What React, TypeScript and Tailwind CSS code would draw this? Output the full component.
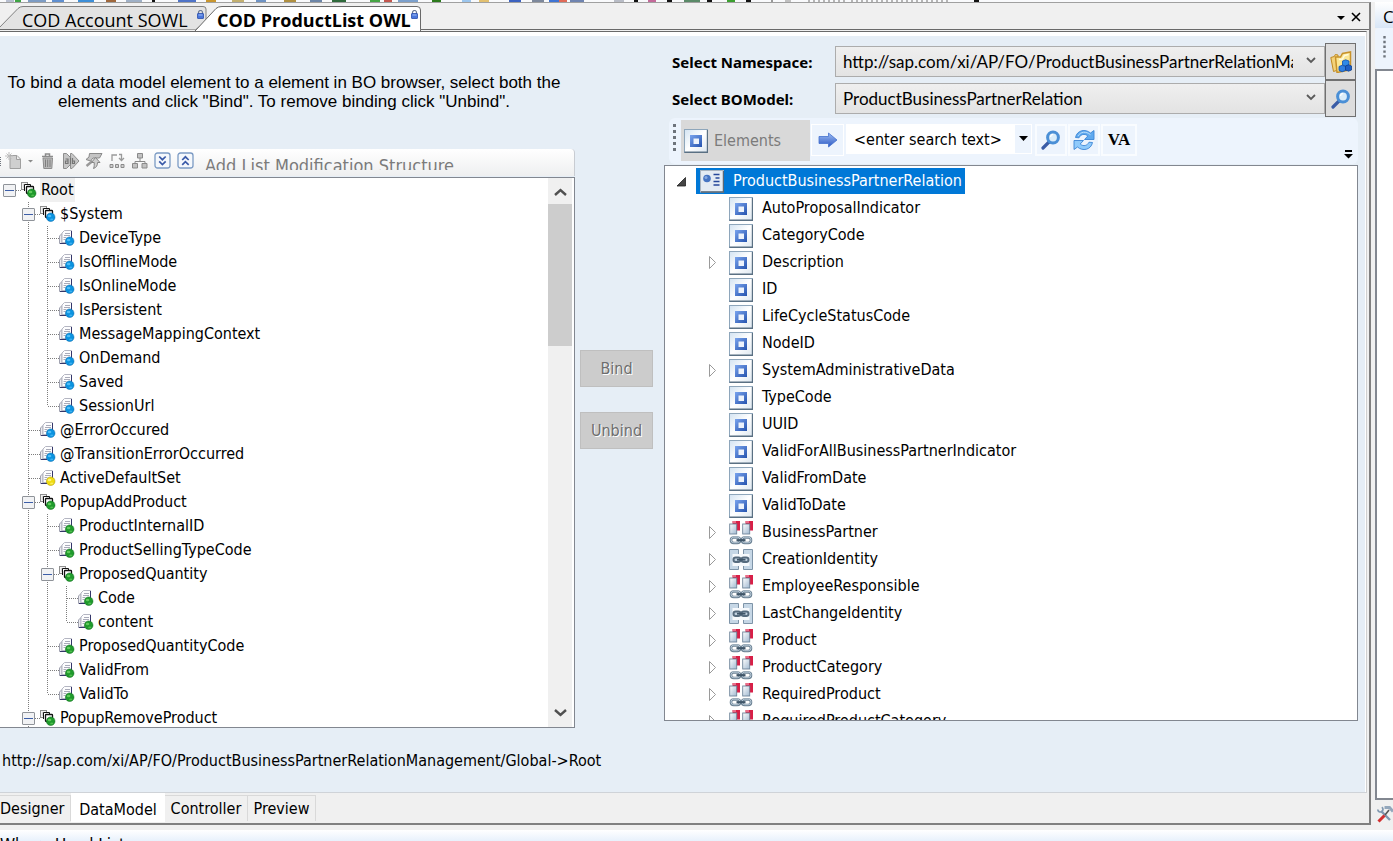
import React from "react";

const tahoma = "font-['DejaVu_Sans_Condensed','Noto_Sans',sans-serif]";

type Cell = "blank" | "pass" | "tee" | "ell" | "box" | "boxTop";
type Tone = "green" | "blue" | "yellow";
interface Node {
  label: string;
  cells: Cell[];
  group?: boolean;
  tone: Tone;
  selected?: boolean;
}

const leaf2 = (label: string, tone: Tone, last = false): Node => ({
  label,
  cells: ["blank", "pass", last ? "ell" : "tee"],
  tone,
});

const dataModel: Node[] = [
  { label: "Root", cells: ["boxTop"], group: true, tone: "green", selected: true },
  { label: "$System", cells: ["blank", "box"], group: true, tone: "blue" },
  leaf2("DeviceType", "blue"),
  leaf2("IsOfflineMode", "blue"),
  leaf2("IsOnlineMode", "blue"),
  leaf2("IsPersistent", "blue"),
  leaf2("MessageMappingContext", "blue"),
  leaf2("OnDemand", "blue"),
  leaf2("Saved", "blue"),
  leaf2("SessionUrl", "blue", true),
  { label: "@ErrorOccured", cells: ["blank", "tee"], tone: "blue" },
  { label: "@TransitionErrorOccurred", cells: ["blank", "tee"], tone: "blue" },
  { label: "ActiveDefaultSet", cells: ["blank", "tee"], tone: "yellow" },
  { label: "PopupAddProduct", cells: ["blank", "box"], group: true, tone: "green" },
  leaf2("ProductInternalID", "green"),
  leaf2("ProductSellingTypeCode", "green"),
  { label: "ProposedQuantity", cells: ["blank", "pass", "box"], group: true, tone: "green" },
  { label: "Code", cells: ["blank", "pass", "pass", "tee"], tone: "green" },
  { label: "content", cells: ["blank", "pass", "pass", "ell"], tone: "green" },
  leaf2("ProposedQuantityCode", "green"),
  leaf2("ValidFrom", "green"),
  leaf2("ValidTo", "green", true),
  { label: "PopupRemoveProduct", cells: ["blank", "box"], group: true, tone: "green" },
];

type Kind = "element" | "assoc" | "link";
const boElements: { label: string; kind: Kind; open?: boolean }[] = [
  { label: "AutoProposalIndicator", kind: "element" },
  { label: "CategoryCode", kind: "element" },
  { label: "Description", kind: "element", open: true },
  { label: "ID", kind: "element" },
  { label: "LifeCycleStatusCode", kind: "element" },
  { label: "NodeID", kind: "element" },
  { label: "SystemAdministrativeData", kind: "element", open: true },
  { label: "TypeCode", kind: "element" },
  { label: "UUID", kind: "element" },
  { label: "ValidForAllBusinessPartnerIndicator", kind: "element" },
  { label: "ValidFromDate", kind: "element" },
  { label: "ValidToDate", kind: "element" },
  { label: "BusinessPartner", kind: "assoc", open: true },
  { label: "CreationIdentity", kind: "link", open: true },
  { label: "EmployeeResponsible", kind: "assoc", open: true },
  { label: "LastChangeIdentity", kind: "link", open: true },
  { label: "Product", kind: "assoc", open: true },
  { label: "ProductCategory", kind: "assoc", open: true },
  { label: "RequiredProduct", kind: "assoc", open: true },
  { label: "RequiredProductCategory", kind: "assoc", open: true },
];

const ballFill: Record<Tone, [string, string, string]> = {
  green: ["#1f9a2c", "#7fe070", "#0f6a1c"],
  blue: ["#0b93e0", "#6fd0ff", "#0a66a8"],
  yellow: ["#f0dc10", "#fffbb0", "#a89200"],
};

function Ball({ tone }: { tone: Tone }) {
  const [base, light, dark] = ballFill[tone];
  return (
    <g>
      <circle cx="10.7" cy="11.2" r="4.300" fill={base} stroke={dark} strokeWidth="0.500" />
      <ellipse cx="9.600" cy="10" rx="1.800" ry="1.200" fill={light} opacity="0.700" />
      <ellipse cx="11.800" cy="13.400" rx="1.600" ry="0.900" fill={light} opacity="0.500" />
    </g>
  );
}

function NodeIcon({ group, tone }: { group?: boolean; tone: Tone }) {
  return (
    <svg width="16" height="16" viewBox="0 0 16 16" className="shrink-0" aria-hidden="true">
      {group ? (
        <g>
          <rect x="0.500" y="0.500" width="6" height="7" fill="#f2f2f2" stroke="#8f8f8f" />
          <path d="M2 3h3M2 5h2" stroke="#b5b5b5" />
          <path d="M3.500 9V2.500H9.500V4" fill="none" stroke="#111" />
          <path d="M4 3h5v2H6v4H4z" fill="#fff" />
          <rect x="5.500" y="4.500" width="7" height="7" rx="0.800" fill="#fff" stroke="#111" strokeWidth="1.300" />
        </g>
      ) : (
        <g>
          <path d="M0.500 6L3 3.500V13.500H0.500z" fill="#ececf0" stroke="#a0a2b0" />
          <path d="M3 3L5.500 0.500H12.500V12.500H3z" fill="#fdfdfe" stroke="#b4b6c2" />
          <path d="M12.500 1v7M1 13.500h6" stroke="#34366a" />
          <path d="M6 3.500h5M5 5.500h6M4.500 7.500h3M4.500 9.500h2" stroke="#a9abb9" />
        </g>
      )}
      <Ball tone={tone} />
    </svg>
  );
}

function TreeCell({ kind }: { kind: Cell }) {
  const dot = { stroke: "#7d7d7d", strokeDasharray: "1 1", fill: "none" };
  const boxed = kind === "box" || kind === "boxTop";
  return (
    <svg width="19" height="24" viewBox="0 0 19 24" className="shrink-0 overflow-visible" aria-hidden="true">
      {(kind === "pass" || kind === "tee" || kind === "box") && <path d="M9.500 0v24" {...dot} />}
      {kind === "ell" && <path d="M9.500 0v12" {...dot} />}
      {(kind === "tee" || kind === "ell" || boxed) && <path d="M10 12.500h11" {...dot} />}
      {boxed && (
        <g>
          <rect x="3.5" y="6.500" width="12" height="12" rx="0.5" fill="#f1f2f4" stroke="#8f9399" />
          <path d="M5 12.500h9" stroke="#3c5ea8" />
        </g>
      )}
    </svg>
  );
}

function ElementIcon() {
  return (
    <svg width="24" height="24" viewBox="0 0 24 24" className="shrink-0" aria-hidden="true">
      <defs>
        <linearGradient id="elFace" x1="0" y1="0" x2="1" y2="1">
          <stop offset="0" stopColor="#d3e3f2" />
          <stop offset="0.5" stopColor="#ffffff" />
          <stop offset="1" stopColor="#dde7f0" />
        </linearGradient>
        <linearGradient id="elBlue" x1="0" y1="0" x2="1" y2="1">
          <stop offset="0" stopColor="#7aa4ee" />
          <stop offset="1" stopColor="#2553ae" />
        </linearGradient>
      </defs>
      <rect x="0.5" y="0.5" width="23" height="23" fill="url(#elFace)" stroke="#8ea6bb" />
      <path d="M0.500 23.300h23V1" fill="none" stroke="#5a7083" strokeWidth="1.400" />
      <rect x="6" y="6" width="12" height="12" fill="url(#elBlue)" />
      <rect x="9.500" y="9.500" width="5.500" height="5.500" fill="#edf3fc" />
    </svg>
  );
}

function ChainLinks({ y }: { y: number }) {
  return (
    <g fill="none">
      <rect x="2" y={y} width="9" height="5.500" rx="2.700" stroke="#6b8193" strokeWidth="2.600" />
      <rect x="13" y={y} width="9" height="5.500" rx="2.700" stroke="#6b8193" strokeWidth="2.600" />
      <rect x="2" y={y - 0.3} width="9" height="5.500" rx="2.700" stroke="#c2d2e0" strokeWidth="0.900" />
      <rect x="13" y={y - 0.3} width="9" height="5.500" rx="2.700" stroke="#c2d2e0" strokeWidth="0.900" />
      <path d={`M7.500 ${y + 2.7}h9`} stroke="#3f5568" strokeWidth="2.200" />
    </g>
  );
}

function AssocIcon() {
  return (
    <svg width="24" height="24" viewBox="0 0 24 24" className="shrink-0" aria-hidden="true">
      <defs>
        <linearGradient id="asFace" x1="0" y1="0" x2="1" y2="1">
          <stop offset="0" stopColor="#ffffff" />
          <stop offset="1" stopColor="#9fb8d0" />
        </linearGradient>
      </defs>
      {[0, 13].map((x) => (
        <g key={x}>
          <rect x={x + 3.5} y="0" width="7.500" height="9.500" fill="#d81f47" />
          <path d={`M${x + 4} 1h3`} stroke="#f2879c" strokeWidth="1.500" />
          <rect x={x + 0.7} y="3" width="7" height="10" fill="url(#asFace)" stroke="#6d8499" strokeWidth="0.900" />
        </g>
      ))}
      <ChainLinks y={16.5} />
    </svg>
  );
}

function LinkIcon() {
  return (
    <svg width="24" height="24" viewBox="0 0 24 24" className="shrink-0" aria-hidden="true">
      <path d="M0.500 1.500h9v20H0.500z" fill="#c6d7e6" stroke="#7e94a8" />
      <path d="M14.500 1.500h9v20H14.500z" fill="#c6d7e6" stroke="#7e94a8" />
      <path d="M3.500 6h17v12h-17z" fill="#f6f9fc" />
      <rect x="4.500" y="9.500" width="7" height="4.500" rx="2.200" fill="#c2d2e0" stroke="#566b7e" strokeWidth="2" />
      <rect x="12.500" y="9.500" width="7" height="4.500" rx="2.200" fill="#c2d2e0" stroke="#566b7e" strokeWidth="2" />
      <path d="M8 11.700h8.500" stroke="#3f5568" strokeWidth="1.800" />
    </svg>
  );
}

function BusinessObjectIcon() {
  return (
    <svg width="24" height="23" viewBox="0 0 24 23" className="shrink-0" aria-hidden="true">
      <rect x="0.5" y="0.5" width="23" height="21.500" fill="#e4ebf3" stroke="#a9b4c0" />
      <path d="M1 22h22.500V1" fill="none" stroke="#5c6773" strokeWidth="1.500" />
      <circle cx="7" cy="8.500" r="3.800" fill="#4674c2" />
      <circle cx="6" cy="7.500" r="1.500" fill="#86a9e2" />
      <path d="M13.500 4.500h6M13.500 11.500h6M13.500 15h6" stroke="#27489a" strokeWidth="1.500" />
      <path d="M15.500 8h4" stroke="#27489a" strokeWidth="1.500" />
    </svg>
  );
}

function Magnifier() {
  return (
    <svg width="20" height="20" viewBox="0 0 20 20" aria-hidden="true">
      <path d="M2 18l6-6" stroke="#3a5ca6" strokeWidth="3.200" strokeLinecap="round" />
      <circle cx="12" cy="7.500" r="5.400" fill="#d9ecfa" stroke="#4a8fd6" strokeWidth="3" />
      <path d="M9.500 7a3 3 0 0 1 2.700-2.600" stroke="#fff" strokeWidth="1.300" fill="none" />
    </svg>
  );
}

function FolderIcon() {
  return (
    <svg width="22" height="22" viewBox="0 0 22 22" aria-hidden="true">
      <path d="M0.800 6.500l3.500-1 1-2L8 4v15l-4.500 1.500z" fill="#f3d27a" stroke="#c08a20" />
      <path d="M5.500 6h5l2-3.500L20.500 1v15l-4 3.500-9.500 2z" fill="#fbe795" stroke="#c8922a" strokeWidth="1.500" />
      <path d="M9 8.500l3.500-.5 2-3.500 4-1" stroke="#fffbe0" strokeWidth="1.500" fill="none" />
      <path d="M12.500 10l3.200-1.200L19 10v4l-3.300 1.200-3.200-1.200z" fill="#2f8ae6" stroke="#0e4fae" strokeWidth="0.800" />
      <path d="M9 15.500l3.200-1.200 3.300 1.200v4l-3.300 1.200L9 19.500z" fill="#2f7fe0" stroke="#0e4fae" strokeWidth="0.800" />
      <path d="M15.500 15l3-1.200 3 1.200v4l-3 1.200-3-1.200z" fill="#1d5fc4" stroke="#0b3f90" strokeWidth="0.800" />
    </svg>
  );
}

function RefreshIcon() {
  return (
    <svg width="22" height="22" viewBox="0 0 22 22" aria-hidden="true">
      <path d="M2.500 8.500C4 1 12.500-.5 17.500 4L21 1.500v9H11.500L14.800 7C11.500 4 7.500 5.500 6 8.800z" fill="#5fa9ee" stroke="#3c86d6" strokeWidth="0.900" />
      <path d="M5 7C7.500 2.500 13 2 17.500 5.700" fill="none" stroke="#b9dcfb" strokeWidth="1" />
      <path d="M19.500 13.500c-1.500 7.500-10 9-15 4.500L1 20.500v-9h9.500L7.200 15c3.300 3 7.300 1.500 8.800-1.800z" fill="#8fcafb" stroke="#3c86d6" strokeWidth="0.900" />
    </svg>
  );
}

function ArrowRight() {
  return (
    <svg width="20" height="16" viewBox="0 0 20 16" aria-hidden="true">
      <defs>
        <linearGradient id="arrowFill" x1="0" y1="0" x2="0" y2="1">
          <stop offset="0" stopColor="#9dbcf2" />
          <stop offset="1" stopColor="#2b58c4" />
        </linearGradient>
      </defs>
      <path d="M1 4.500h9.500V1L19 8l-8.500 7v-3.500H1z" fill="url(#arrowFill)" stroke="#4471cf" strokeWidth="0.800" />
    </svg>
  );
}

function Lock() {
  return (
    <svg width="7" height="9" viewBox="0 0 7 9" className="mt-[2px] shrink-0" aria-hidden="true">
      <path d="M1.500 4V2.500a2 2 0 0 1 4 0V4" fill="none" stroke="#6b7a96" strokeWidth="1.200" />
      <rect x="0.5" y="3.500" width="6" height="5" rx="0.500" fill="#4a77dc" stroke="#2a4fae" strokeWidth="0.800" />
      <path d="M1.500 5h4" stroke="#a9c2f6" strokeWidth="0.900" />
    </svg>
  );
}

function Grip({ className }: { className: string }) {
  return (
    <svg width="3" height="30" viewBox="0 0 3 30" className={className} aria-hidden="true">
      <path d="M1.500 0v30" stroke="#6e747c" strokeWidth="3" strokeDasharray="3 3" />
    </svg>
  );
}

function Chevron() {
  return (
    <svg width="10" height="7" viewBox="0 0 10 7" className="pointer-events-none absolute top-[11px] right-[9px]" aria-hidden="true">
      <path d="M1 1l4 4 4-4" fill="none" stroke="#5a5a5a" strokeWidth="1.800" />
    </svg>
  );
}

function ToolGlyph({ label, children }: { label: string; children: React.ReactNode }) {
  return (
    <button type="button" aria-label={label} className="shrink-0">
      <svg width="18" height="18" viewBox="0 0 18 18" aria-hidden="true">
        {children}
      </svg>
    </button>
  );
}

function DoubleChevronBox({ up }: { up?: boolean }) {
  return (
    <g fill="none">
      <rect x="1" y="1" width="15" height="15" rx="2.500" fill="#f5f8fc" stroke="#7c9bc4" strokeWidth="1.300" />
      {up ? (
        <path d="M5.200 8l3.200-3.200L11.700 8M5.200 12.800l3.200-3.200 3.300 3.200" stroke="#3a5aa8" strokeWidth="1.700" />
      ) : (
        <path d="M5.200 4.500l3.200 3.200 3.300-3.200M5.200 9.300l3.200 3.200 3.300-3.200" stroke="#3a5aa8" strokeWidth="1.700" />
      )}
    </g>
  );
}

const stripMarks: [number, number, string][] = [
  [6, 8, "#b8bfd0"], [15, 6, "#3fa545"], [28, 18, "#7d9cc4"], [52, 12, "#5f8fd0"], [78, 16, "#3d8fd8"],
  [106, 10, "#a0683c"], [126, 16, "#9fb0c6"], [152, 3, "#111"], [178, 18, "#4f74c8"], [206, 10, "#c9962e"],
  [232, 12, "#c3b070"], [256, 10, "#6f93c4"], [284, 12, "#b09040"], [310, 12, "#6d86a8"], [332, 14, "#2f6a3c"],
  [370, 10, "#46a545"], [384, 8, "#c4574f"], [398, 20, "#7ca0cc"], [432, 9, "#2c7a1c"], [462, 9, "#9cc6ee"],
  [479, 10, "#e2c070"], [509, 12, "#3c62c0"], [532, 12, "#7d889c"], [549, 10, "#3f74d4"], [559, 8, "#e06a58"],
  [570, 14, "#6f84b0"], [614, 10, "#b8bcc6"], [634, 4, "#111"], [648, 8, "#c46a9a"], [667, 5, "#111"],
  [684, 16, "#5a8a68"], [707, 5, "#111"], [727, 8, "#3ba02f"], [746, 5, "#111"], [771, 2, "#999"], [785, 6, "#c0c0c0"],
  [974, 5, "#111"],
];

export default function App() {
  return (
    <div className={`flex h-screen flex-col overflow-hidden bg-[#f0f0f0] text-base text-black ${tahoma}`}>
      <svg width="100%" height="2" className="block shrink-0 bg-[#f9fafc]" aria-hidden="true">
        {stripMarks.map(([x, w, c]) => (
          <rect key={x} x={x} y="0" width={w} height="2" fill={c} />
        ))}
        <path d="M808 1h38M851 1h100" stroke="#b5b5b5" strokeWidth="2" strokeDasharray="2 3" />
      </svg>

      <div className="flex min-h-0 flex-1">
        <section className="flex min-w-0 flex-1 flex-col border-t border-r-2 border-b-2 border-t-[#a0a0a0] border-r-[#808080] border-b-[#808080]">
          <div className="relative flex h-[27px] shrink-0 items-start border-b border-[#696969] font-['Open_Sans',sans-serif]">
            <svg width="424" height="28" viewBox="0 0 424 28" className="absolute top-0 left-0" aria-hidden="true">
              <path d="M-2 26L18 5.500Q20 3.500 23 3.500H203Q206 3.500 206 6V18L196 26.500" fill="#e3e3e3" stroke="#808080" />
              <path d="M195 28L216 5.500Q218 3.500 222 3.500H417Q420.500 3.500 420.500 7V26.500V28" fill="#fff" stroke="#696969" />
            </svg>
            <button type="button" className="relative flex w-52 shrink-0 items-start pt-[5px] pl-[22px] text-lg leading-6">
              <span className="w-[175px] text-left whitespace-nowrap">COD Account SOWL</span>
              <Lock />
            </button>
            <button type="button" className="relative flex items-start pt-[5px] pl-[9px] text-lg leading-6 font-bold">
              <span className="w-[194px] text-left whitespace-nowrap">COD ProductList OWL</span>
              <Lock />
            </button>
            <div className="relative ml-auto flex items-center gap-[6px] pt-[9px] pr-2">
              <button type="button" aria-label="Open documents">
                <svg width="8" height="10" viewBox="0 0 8 10" aria-hidden="true">
                  <path d="M0 4h8L4 8z" />
                </svg>
              </button>
              <button type="button" aria-label="Close">
                <svg width="10" height="10" viewBox="0 0 10 10" aria-hidden="true">
                  <path d="M1 1l8 8M9 1l-8 8" stroke="#000" strokeWidth="1.600" />
                </svg>
              </button>
            </div>
          </div>

          <main className="mt-px mr-[2px] flex min-h-0 flex-1 border-t border-r border-b border-t-[#696969] border-r-[#d0d0d0] border-b-[#cfd3d8] bg-white pt-1 pr-px">
            <div className="flex min-w-0 flex-1 bg-[#e6eef6] pr-[7px]">
              <div className="flex min-w-0 grow-[664] basis-0 flex-col">
                <div className="flex min-h-0 flex-1">
                  <div className="flex min-w-0 flex-1 flex-col">
                    <p className="mt-[37px] h-[76px] shrink-0 pr-[7px] text-center font-['Liberation_Sans',Arial,sans-serif] text-[17px] leading-[19px]">
                      To bind a data model element to a element in BO browser, select both the
                      <br />
                      elements and click "Bind". To remove binding click "Unbind".
                    </p>
                    <div className="flex h-[27px] shrink-0 items-start rounded-tr border-r border-[#c8ccd2] bg-linear-to-b from-white to-[#eeeff0] pt-[3px]">
                      <Grip className="h-5 w-px shrink-0" />
                      <div className="flex shrink-0 gap-[5px] pl-1">
                        <div className="flex items-center">
                          <ToolGlyph label="New">
                            <path d="M5 3.500h7l3.500 3.500v9.500H5z" fill="#cfcfcf" stroke="#9f9f9f" />
                            <path d="M11.500 3.500V7.500H15" fill="#eee" stroke="#9f9f9f" />
                            <path d="M4 0v8M0 4h8M1.500 1.500l5 5M6.500 1.500l-5 5" stroke="#bdbdbd" />
                          </ToolGlyph>
                          <svg width="11" height="18" viewBox="0 0 11 18" aria-hidden="true">
                            <path d="M5 8h5L7.500 10.500z" fill="#8a8a8a" />
                          </svg>
                        </div>
                        <ToolGlyph label="Delete">
                          <path d="M3 4.500h11M6.500 4V2h4v2" fill="none" stroke="#8c8c8c" strokeWidth="1.500" />
                          <path d="M4 6h9.500l-.7 10.500H4.800z" fill="#b8b8b8" stroke="#8c8c8c" />
                          <path d="M6.500 7.500v7.500M8.700 7.500v7.500M11 7.500v7.500" stroke="#7e7e7e" />
                        </ToolGlyph>
                        <ToolGlyph label="Rename">
                          <path d="M1.500 1.500h3l4 4v-4h1.500l7 7.500-7 7.500H8.500v-4l-4 4h-3z" fill="#c6c6c6" stroke="#8e8e8e" />
                          <path d="M8.500 5.500v7M3.500 7h2.500v4.500H3.500V9H6M10.500 6v5.500h2V9h-2" fill="none" stroke="#757575" strokeWidth="1.200" />
                        </ToolGlyph>
                        <ToolGlyph label="Bind to attribute">
                          <path d="M4.500 1.500h12.500l-2.500 4.500H8L5.500 9 1 7.500 4 5z" fill="#c4c4c4" stroke="#8a8a8a" />
                          <path d="M1.500 14l6-5" stroke="#999" strokeWidth="2.400" />
                          <path d="M10.500 5.500l4.500 5h-2.500c0 3-1 5-4 6 1-2 .7-4 .7-6H6.500z" fill="#cfcfcf" stroke="#858585" />
                        </ToolGlyph>
                        <ToolGlyph label="Move">
                          <path d="M4 9V3h5M11 2.500h2.500V8M11 6l2.500 2.500L16 6" fill="none" stroke="#9a9a9a" strokeWidth="1.300" />
                          <path d="M2 12.500h3v3H2zM7.500 12.500h3v3h-3zM13 12.500h3v3h-3z" fill="#d0d0d0" stroke="#8a8a8a" />
                        </ToolGlyph>
                        <ToolGlyph label="Structure">
                          <path d="M9 6v4M4 12V9.500h10V12" fill="none" stroke="#8a8a8a" />
                          <path d="M6.500 1.500h5v4.500h-5zM1.500 11.500h5V16h-5zM11 11.500h5V16h-5z" fill="#c2c2c2" stroke="#8a8a8a" />
                        </ToolGlyph>
                        <ToolGlyph label="Expand all">
                          <DoubleChevronBox />
                        </ToolGlyph>
                        <ToolGlyph label="Collapse all">
                          <DoubleChevronBox up />
                        </ToolGlyph>
                      </div>
                      <button type="button" className="ml-[10px] h-[18px] overflow-hidden pt-[2px] text-left text-lg leading-6 whitespace-nowrap text-[#7b7b7b]">
                        Add List Modification Structure
                      </button>
                    </div>
                    <div className="mt-px flex min-h-0 flex-1 border-t border-r border-b border-[#828790] bg-white pr-[2px]">
                      <ul role="tree" aria-label="Data model" className="min-w-0 flex-1 overflow-hidden">
                        {dataModel.map((n) => (
                          <li key={n.label} role="treeitem" className="flex h-6 items-center">
                            {n.cells.map((c, i) => (
                              <TreeCell key={i} kind={c} />
                            ))}
                            <span className="w-[2px] shrink-0" />
                            <NodeIcon group={n.group} tone={n.tone} />
                            <span className={n.selected ? "ml-[3px] bg-[#f0f0f0] px-px leading-6" : "ml-1 leading-6 whitespace-nowrap"}>
                              {n.label}
                            </span>
                          </li>
                        ))}
                      </ul>
                      <div className="flex w-6 shrink-0 flex-col bg-[#f0f0f0]">
                        <svg width="24" height="26" viewBox="0 0 24 26" className="shrink-0" aria-hidden="true">
                          <path d="M7 17l5.500-5 5.500 5" fill="none" stroke="#505050" strokeWidth="2.400" />
                        </svg>
                        <div className="h-[142px] bg-[#cdcdcd]" />
                        <svg width="24" height="26" viewBox="0 0 24 26" className="mt-auto shrink-0" aria-hidden="true">
                          <path d="M7 9l5.500 5 5.500-5" fill="none" stroke="#505050" strokeWidth="2.400" />
                        </svg>
                      </div>
                    </div>
                  </div>
                  <div className="flex w-[89px] shrink-0 flex-col gap-[25px] pt-[314px] pr-[11px] pl-[5px] text-[#6d6d6d]">
                    <button type="button" className="h-[37px] border border-[#bfbfbf] bg-[#cccccc] text-shadow-[1px_1px_0_#fff]">
                      Bind
                    </button>
                    <button type="button" className="h-[37px] border border-[#bfbfbf] bg-[#cccccc] text-shadow-[1px_1px_0_#fff]">
                      Unbind
                    </button>
                  </div>
                </div>
                <p className="flex h-16 shrink-0 items-center pt-px pl-[2px] whitespace-nowrap">
                  http://sap.com/xi/AP/FO/ProductBusinessPartnerRelationManagement/Global-&gt;Root
                </p>
              </div>

              <div className="flex min-w-0 grow-[694] basis-0 flex-col pt-[7px] pb-[71px] font-['Noto_Sans',sans-serif] text-[15px]">
                <div className="flex h-[37px] shrink-0 items-center pr-[2px] pl-2">
                  <label htmlFor="namespace" className="w-[163px] shrink-0 pt-[2px] font-bold">
                    Select Namespace:
                  </label>
                  <div className="relative min-w-0 flex-1">
                    <select id="namespace" className="block h-[31px] w-full appearance-none border border-[#acacac] bg-linear-to-b from-[#efefef] to-[#e3e3e3] pr-[31px] pl-[7px] font-['Lato',sans-serif] text-[17px]">
                      <option>http://sap.com/xi/AP/FO/ProductBusinessPartnerRelationManagement/Global</option>
                    </select>
                    <Chevron />
                  </div>
                  <button type="button" aria-label="Browse namespaces" className="flex h-[37px] w-[31px] items-center justify-center border border-[#707070] bg-[#dddddd]">
                    <FolderIcon />
                  </button>
                </div>
                <div className="flex h-[37px] shrink-0 items-center pr-[2px] pl-2">
                  <label htmlFor="bomodel" className="w-[163px] shrink-0 pt-[2px] font-bold">
                    Select BOModel:
                  </label>
                  <div className="relative min-w-0 flex-1">
                    <select id="bomodel" className="block h-[31px] w-full appearance-none border border-[#acacac] bg-linear-to-b from-[#efefef] to-[#e3e3e3] pr-[31px] pl-[7px] font-['Lato',sans-serif] text-[17px]">
                      <option>ProductBusinessPartnerRelation</option>
                    </select>
                    <Chevron />
                  </div>
                  <button type="button" aria-label="Search models" className="flex h-[37px] w-[31px] items-center justify-center border border-[#707070] bg-[#dddddd]">
                    <Magnifier />
                  </button>
                </div>

                <div className="mt-px mb-px ml-[5px] flex h-[46px] shrink-0 items-start rounded-md bg-[#edf4fd] pl-1">
                  <Grip className="mt-[6px] shrink-0" />
                  <button type="button" className={`mt-[2px] ml-[5px] flex h-[41px] w-[129px] shrink-0 items-center gap-[6px] self-start bg-[#d9d9d9] pl-[3px] text-base text-[#7b7b7b] ${tahoma}`}>
                    <ElementIcon />
                    Elements
                  </button>
                  <button type="button" aria-label="Go" className="mt-[6px] ml-px flex h-8 w-[33px] shrink-0 items-center justify-center border border-white">
                    <ArrowRight />
                  </button>
                  <div className="mt-[6px] ml-[2px] flex h-[30px] w-[186px] shrink-0 bg-white">
                    <input aria-label="Search text" defaultValue="<enter search text>" className={`w-[169px] bg-transparent pt-[2px] pl-2 text-base ${tahoma}`} />
                    <button type="button" aria-label="Search history" className="my-px flex w-4 items-center justify-center bg-[#edf4fd]">
                      <svg width="9" height="6" viewBox="0 0 9 6" aria-hidden="true">
                        <path d="M0 0h9L4.500 5z" />
                      </svg>
                    </button>
                  </div>
                  <div className="mt-[6px] ml-[3px] flex gap-px">
                    <button type="button" aria-label="Search" className="flex h-8 w-8 items-center justify-center border-2 border-[#f9fcff]">
                      <Magnifier />
                    </button>
                    <button type="button" aria-label="Refresh" className="flex h-8 w-8 items-center justify-center border-2 border-[#f9fcff]">
                      <RefreshIcon />
                    </button>
                    <button type="button" className="h-8 w-9 border-2 border-[#f9fcff] font-['Liberation_Serif',serif] text-[17px] font-bold">
                      VA
                    </button>
                  </div>
                  <svg width="9" height="9" viewBox="0 0 9 9" className="mt-8 mr-[5px] ml-auto shrink-0" aria-hidden="true">
                    <path d="M1 0h7v2H1zM0 4h9L4.500 8.500z" />
                  </svg>
                </div>

                <ul role="tree" aria-label="Business object" className={`min-h-0 flex-1 overflow-hidden border border-[#828790] bg-white text-base ${tahoma}`}>
                  <li role="treeitem" className="flex h-[29px] items-start pt-[2px] pl-[11px]">
                    <svg width="20" height="26" viewBox="0 0 20 26" className="shrink-0" aria-hidden="true">
                      <path d="M1 18h8.500V9.500z" fill="#454545" stroke="#222" strokeWidth="0.800" />
                    </svg>
                    <span className="flex h-[26px] items-center bg-[#0078d7] pr-[3px] pl-1 text-white">
                      <BusinessObjectIcon />
                      <span className="pb-px pl-[9px] leading-6">ProductBusinessPartnerRelation</span>
                    </span>
                  </li>
                  {boElements.map((e) => (
                    <li key={e.label} role="treeitem" className="flex h-[27px] items-center pl-[43px]">
                      <svg width="21" height="27" viewBox="0 0 21 27" className="shrink-0" aria-hidden="true">
                        {e.open && <path d="M1.500 7.500l6 6-6 6z" fill="#fff" stroke="#9a9a9a" />}
                      </svg>
                      {e.kind === "element" ? <ElementIcon /> : e.kind === "assoc" ? <AssocIcon /> : <LinkIcon />}
                      <span className="pb-px pl-[9px] leading-6 whitespace-nowrap">{e.label}</span>
                    </li>
                  ))}
                </ul>
              </div>
            </div>
          </main>

          <nav className="flex h-[30px] shrink-0 items-start" aria-label="Views">
            <button type="button" className="mt-[2px] h-[26px] w-[71px] border-t border-r border-[#d9d9d9] text-left">
              Designer
            </button>
            <button type="button" className="h-[29px] w-[94px] bg-white pt-1">
              DataModel
            </button>
            <button type="button" className="mt-[2px] h-[26px] w-[83px] border-t border-r border-[#d9d9d9]">
              Controller
            </button>
            <button type="button" className="mt-[2px] h-[26px] w-[68px] border-t border-r border-[#d9d9d9]">
              Preview
            </button>
          </nav>
        </section>

        <aside className="ml-1 flex w-[18px] shrink-0 flex-col overflow-hidden">
          <h2 className="h-[26px] shrink-0 bg-linear-to-b from-white to-[#d8e6f6] pl-2 font-['Open_Sans',sans-serif] text-[17px] leading-[30px]">C</h2>
          <div className="flex h-[41px] shrink-0 justify-center rounded-l bg-[#edf4fd] pt-2">
            <Grip className="h-6" />
          </div>
          <div className="min-h-0 flex-1 border-2 border-r-0 border-[#828790] bg-white" />
          <svg width="16" height="25" viewBox="0 0 16 25" className="ml-[2px] shrink-0" aria-hidden="true">
            <path d="M4 11l9 9" stroke="#8098b0" strokeWidth="2.400" />
            <path d="M0.800 9.500a2.600 2.600 0 1 0 4-2.300" stroke="#8098b0" strokeWidth="1.700" fill="none" />
            <path d="M1.500 21.500l6-6" stroke="#d22f2f" strokeWidth="3" />
            <path d="M8 15l4-5" stroke="#555" strokeWidth="1.600" />
            <path d="M7.500 7.500l5 0 3.500 4" stroke="#93a7bc" strokeWidth="2.800" fill="none" />
          </svg>
        </aside>
      </div>

      <footer className="mt-[5px] h-[11px] shrink-0 overflow-hidden bg-linear-to-b from-white to-[#e8f1fc]">
        <h2 className="pt-[3px] text-[17px] leading-6">Where-Used List</h2>
      </footer>
    </div>
  );
}
